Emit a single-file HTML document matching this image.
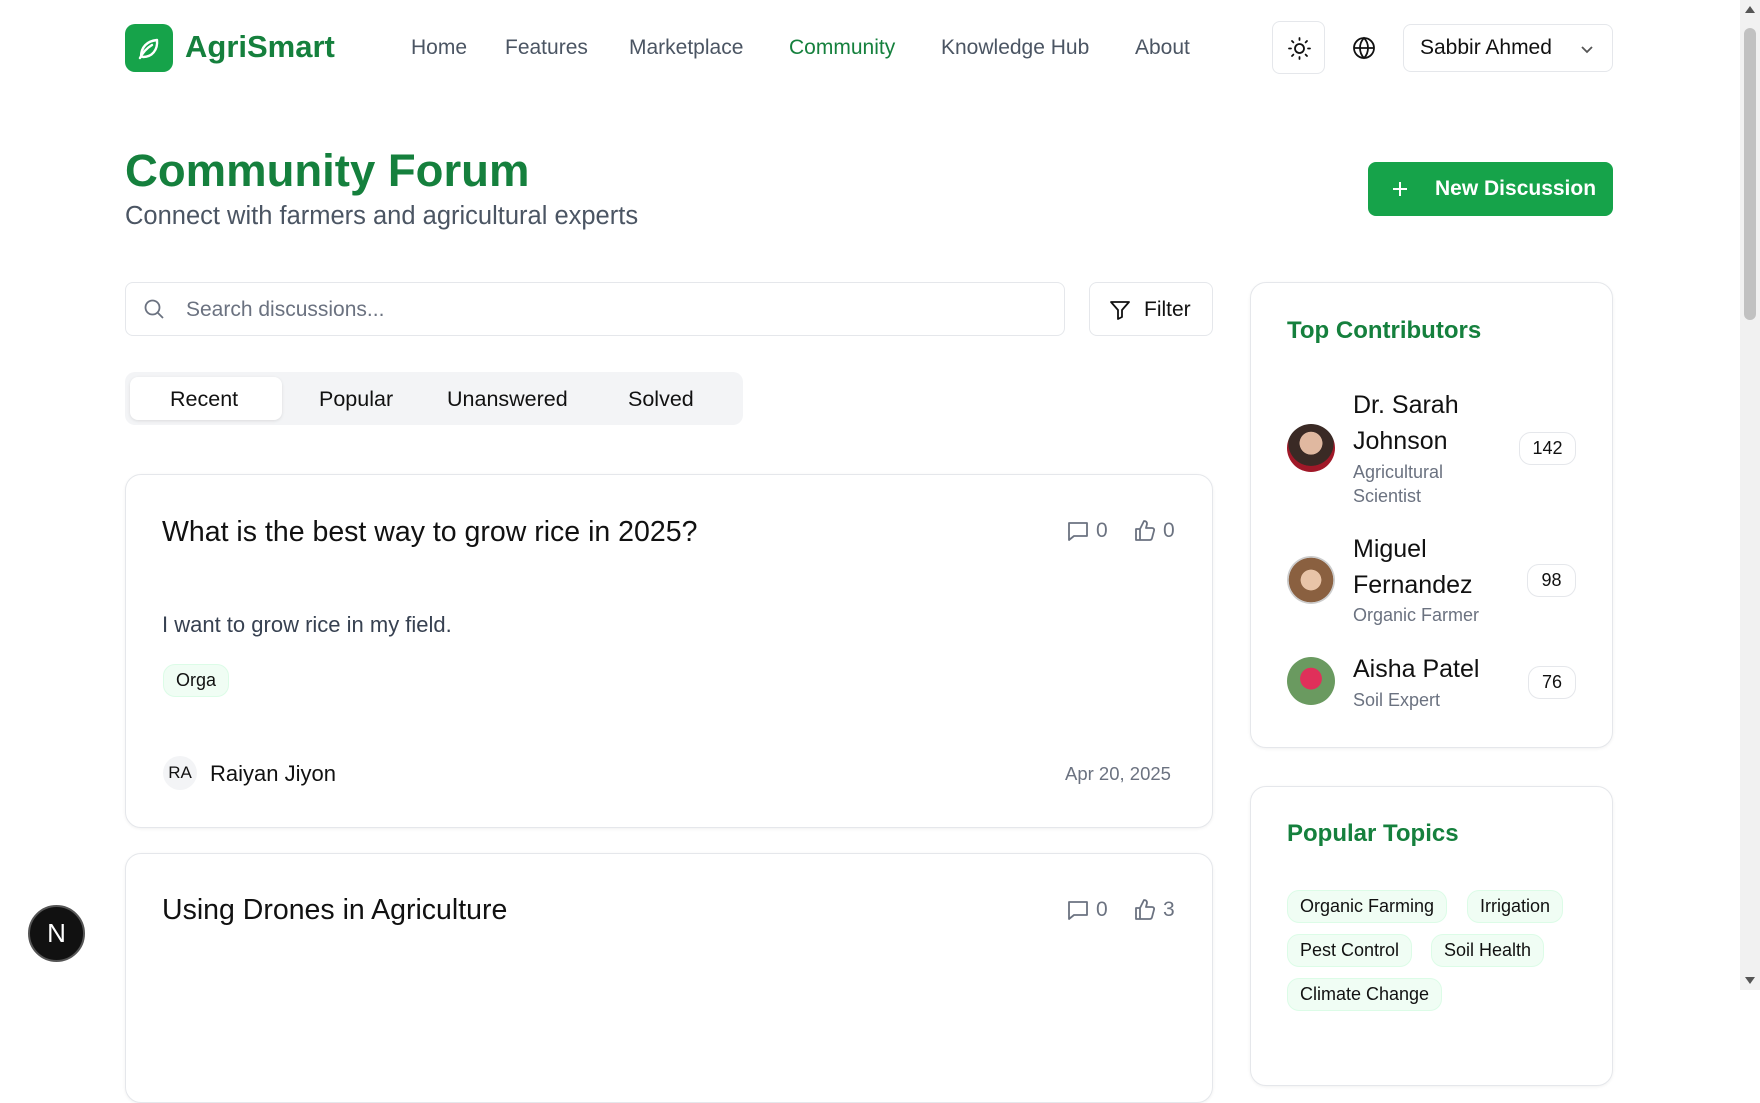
<!DOCTYPE html>
<html><head><meta charset="utf-8"><style>
*{box-sizing:border-box;margin:0;padding:0}
body{width:1760px;height:990px;overflow:hidden;background:#fff;font-family:"Liberation Sans",sans-serif;color:#111;position:relative}
.a{position:absolute}
.nav{font-size:21px;color:#4b5563;top:36px}
.card{position:absolute;border:1px solid #e5e7eb;border-radius:16px;background:#fff;box-shadow:0 1px 3px rgba(0,0,0,.06)}
.tag{position:absolute;background:#f0fdf4;border:1px solid #dcfce7;border-radius:12px;font-size:18px;color:#111;padding:5px 12px}
.cnt{position:absolute;border:1px solid #e5e7eb;border-radius:12px;font-size:18px;padding:5px 0;text-align:center}
.av{position:absolute;width:48px;height:48px;border-radius:50%}
.nm{position:absolute;font-size:24px;line-height:36px;color:#111}
.rl{position:absolute;font-size:18px;line-height:24px;color:#6b7280}
.ic{position:absolute;font-size:21px;color:#6b7280;display:flex;align-items:center;gap:6px}
</style></head><body>
<div class="a" style="left:125px;top:24px;width:48px;height:48px;background:#16a34a;border-radius:10px">
<svg width="48" height="48" viewBox="0 0 48 48" fill="none" stroke="#fff" stroke-width="2.4" stroke-linecap="round" stroke-linejoin="round"><path d="M16 33c0-10 6-16 16-17 1 10-5 17-14 17"/><path d="M15 34c3-6 7-10 12-13"/></svg></div>
<div class="a" style="left:185px;top:29px;font-size:31px;font-weight:bold;color:#15803d">AgriSmart</div>
<div class="a nav" style="left:411px">Home</div>
<div class="a nav" style="left:505px">Features</div>
<div class="a nav" style="left:629px">Marketplace</div>
<div class="a nav" style="left:789px;color:#15803d">Community</div>
<div class="a nav" style="left:941px">Knowledge Hub</div>
<div class="a nav" style="left:1135px">About</div>
<div class="a" style="left:1272px;top:21px;width:53px;height:53px;border:1px solid #e5e7eb;border-radius:8px">
<svg width="53" height="53" viewBox="0 0 53 53" fill="none" stroke="#111" stroke-width="1.8" stroke-linecap="round"><circle cx="26.5" cy="26.5" r="4.5"/><path d="M26.5 16v2M26.5 35v2M16 26.5h2M35 26.5h2M19 19l1.4 1.4M32.6 32.6l1.4 1.4M19 34l1.4-1.4M32.6 20.4l1.4-1.4"/></svg></div>
<svg class="a" style="left:1352px;top:36px" width="24" height="24" viewBox="0 0 24 24" fill="none" stroke="#111" stroke-width="1.8"><circle cx="12" cy="12" r="10"/><path d="M2 12h20M12 2c3 3 4 7 4 10s-1 7-4 10c-3-3-4-7-4-10s1-7 4-10z"/></svg>
<div class="a" style="left:1403px;top:24px;width:210px;height:48px;border:1px solid #e5e7eb;border-radius:8px;font-size:21px;line-height:46px;padding-left:16px">Sabbir Ahmed
<svg class="a" style="left:175px;top:16px" width="16" height="16" viewBox="0 0 16 16" fill="none" stroke="#555" stroke-width="1.8"><path d="M3 6l5 5 5-5"/></svg></div>

<div class="a" style="left:125px;top:145px;font-size:45.5px;font-weight:bold;color:#15803d">Community Forum</div>
<div class="a" style="left:125px;top:202px;font-size:25.5px;color:#4b5563">Connect with farmers and agricultural experts</div>
<div class="a" style="left:1368px;top:162px;width:245px;height:54px;background:#16a34a;border-radius:8px;color:#fff;font-size:21px;font-weight:bold;line-height:54px;padding-left:67px">New Discussion
<svg class="a" style="left:22px;top:17px" width="20" height="20" viewBox="0 0 20 20" stroke="#fff" stroke-width="2"><path d="M10 3v14M3 10h14"/></svg></div>

<div class="a" style="left:125px;top:282px;width:940px;height:54px;border:1px solid #e5e7eb;border-radius:8px;font-size:21px;color:#6b7280;line-height:54px;padding-left:60px">Search discussions...
<svg class="a" style="left:17px;top:15px" width="22" height="22" viewBox="0 0 22 22" fill="none" stroke="#6b7280" stroke-width="1.8"><circle cx="9.5" cy="9.5" r="7"/><path d="M15 15l5 5"/></svg></div>
<div class="a" style="left:1089px;top:282px;width:124px;height:54px;border:1px solid #e5e7eb;border-radius:8px;font-size:21px;line-height:54px;padding-left:54px">Filter
<svg class="a" style="left:18px;top:15px" width="24" height="24" viewBox="0 0 24 24" fill="none" stroke="#111" stroke-width="1.8" stroke-linejoin="round"><path d="M3 4h18l-7 8v7l-4 2v-9z"/></svg></div>

<div class="a" style="left:125px;top:372px;width:618px;height:53px;background:#f3f4f6;border-radius:10px"></div>
<div class="a" style="left:130px;top:377px;width:152px;height:43px;background:#fff;border-radius:8px;box-shadow:0 1px 3px rgba(0,0,0,.1)"></div>
<div class="a" style="left:170px;top:387px;font-size:21.5px">Recent</div>
<div class="a" style="left:319px;top:387px;font-size:21.5px">Popular</div>
<div class="a" style="left:447px;top:387px;font-size:21.5px">Unanswered</div>
<div class="a" style="left:628px;top:387px;font-size:21.5px">Solved</div>

<div class="card" style="left:125px;top:474px;width:1088px;height:354px"></div>
<div class="a" style="left:162px;top:516px;font-size:28.5px">What is the best way to grow rice in 2025?</div>
<div class="ic" style="left:1066px;top:519px"><svg width="24" height="24" viewBox="0 0 24 24" fill="none" stroke="#6b7280" stroke-width="1.8" stroke-linejoin="round"><path d="M3 4h18v13H8l-5 4z"/></svg>0</div>
<div class="ic" style="left:1133px;top:519px"><svg width="24" height="24" viewBox="0 0 24 24" fill="none" stroke="#6b7280" stroke-width="1.8" stroke-linejoin="round"><path d="M7 10v11M3 10h4v11H3zM7 10l4-8c2 0 3 1 3 3l-1 4h6c1.5 0 2.5 1.3 2 2.7l-2 7.5c-.3 1-1.2 1.8-2.3 1.8H7"/></svg>0</div>
<div class="a" style="left:162px;top:612px;font-size:22px;color:#374151">I want to grow rice in my field.</div>
<div class="tag" style="left:163px;top:664px">Orga</div>
<div class="a" style="left:163px;top:756px;width:34px;height:34px;border-radius:50%;background:#f3f4f6;font-size:17px;line-height:34px;text-align:center">RA</div>
<div class="a" style="left:210px;top:761px;font-size:22px">Raiyan Jiyon</div>
<div class="a" style="left:1065px;top:763px;font-size:18.5px;color:#6b7280">Apr 20, 2025</div>

<div class="card" style="left:125px;top:853px;width:1088px;height:250px"></div>
<div class="a" style="left:162px;top:894px;font-size:28.5px">Using Drones in Agriculture</div>
<div class="ic" style="left:1066px;top:898px"><svg width="24" height="24" viewBox="0 0 24 24" fill="none" stroke="#6b7280" stroke-width="1.8" stroke-linejoin="round"><path d="M3 4h18v13H8l-5 4z"/></svg>0</div>
<div class="ic" style="left:1133px;top:898px"><svg width="24" height="24" viewBox="0 0 24 24" fill="none" stroke="#6b7280" stroke-width="1.8" stroke-linejoin="round"><path d="M7 10v11M3 10h4v11H3zM7 10l4-8c2 0 3 1 3 3l-1 4h6c1.5 0 2.5 1.3 2 2.7l-2 7.5c-.3 1-1.2 1.8-2.3 1.8H7"/></svg>3</div>

<div class="card" style="left:1250px;top:282px;width:363px;height:466px"></div>
<div class="a" style="left:1287px;top:317px;font-size:24px;font-weight:bold;color:#15803d">Top Contributors</div>
<div class="av" style="left:1287px;top:424px;background:radial-gradient(circle at 50% 40%,#e0b8a0 0 30%,#3a2a25 31% 60%,#a01828 61%)"></div>
<div class="nm" style="left:1353px;top:387px;font-size:25px">Dr. Sarah<br>Johnson</div>
<div class="rl" style="left:1353px;top:460px">Agricultural<br>Scientist</div>
<div class="cnt" style="left:1519px;top:432px;width:57px">142</div>
<div class="av" style="left:1287px;top:556px;background:radial-gradient(circle at 50% 50%,#e8c4a8 0 30%,#8a6040 31% 65%,#ccc 66%)"></div>
<div class="nm" style="left:1353px;top:531px;font-size:25px">Miguel<br>Fernandez</div>
<div class="rl" style="left:1353px;top:603px">Organic Farmer</div>
<div class="cnt" style="left:1527px;top:564px;width:49px">98</div>
<div class="av" style="left:1287px;top:657px;background:radial-gradient(circle at 50% 45%,#e0305a 0 30%,#6a9a60 31%)"></div>
<div class="nm" style="left:1353px;top:651px;font-size:25px">Aisha Patel</div>
<div class="rl" style="left:1353px;top:688px">Soil Expert</div>
<div class="cnt" style="left:1528px;top:666px;width:48px">76</div>

<div class="card" style="left:1250px;top:786px;width:363px;height:300px"></div>
<div class="a" style="left:1287px;top:820px;font-size:24px;font-weight:bold;color:#15803d">Popular Topics</div>
<div class="tag" style="left:1287px;top:890px">Organic Farming</div>
<div class="tag" style="left:1467px;top:890px">Irrigation</div>
<div class="tag" style="left:1287px;top:934px">Pest Control</div>
<div class="tag" style="left:1431px;top:934px">Soil Health</div>
<div class="tag" style="left:1287px;top:978px">Climate Change</div>

<div class="a" style="left:28px;top:905px;width:57px;height:57px;border-radius:50%;background:#111;border:2px solid #555;color:#fff;font-size:26px;line-height:53px;text-align:center">N</div>
<div class="a" style="left:1740px;top:0;width:20px;height:990px;background:#f1f1f1"></div>
<div class="a" style="left:1744px;top:28px;width:12px;height:292px;background:#c1c1c1;border-radius:6px"></div>
<div class="a" style="left:1745px;top:6px;width:0;height:0;border-left:5px solid transparent;border-right:5px solid transparent;border-bottom:7px solid #555"></div>
<div class="a" style="left:1745px;top:977px;width:0;height:0;border-left:5px solid transparent;border-right:5px solid transparent;border-top:7px solid #555"></div>
</body></html>
